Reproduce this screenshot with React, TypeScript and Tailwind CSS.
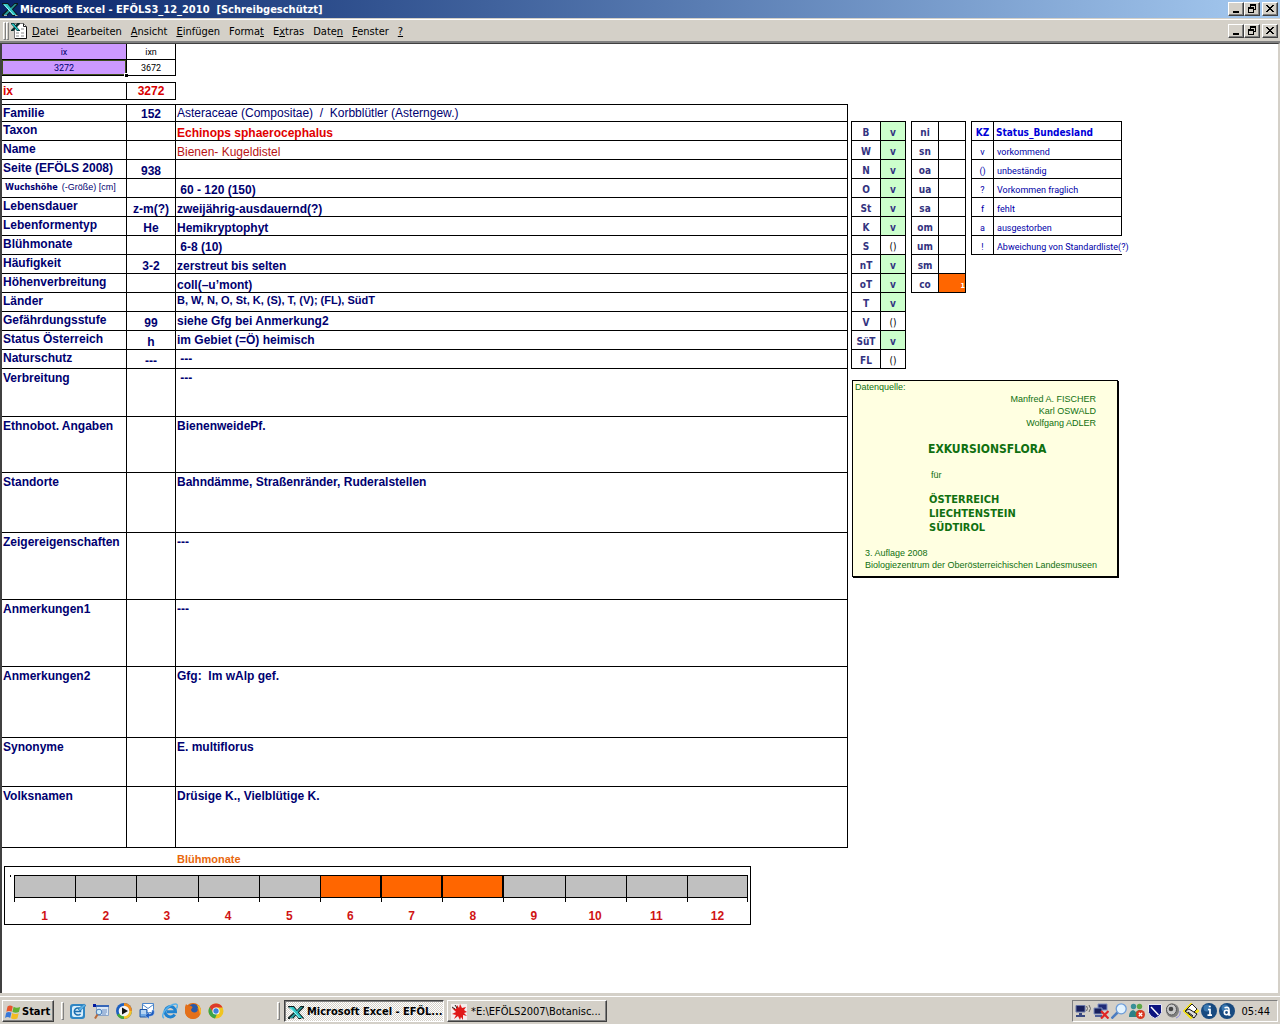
import type { ReactNode } from 'react';
import clsx from 'clsx';

type Align = 'top' | 'middle' | 'bottom';

type FieldRow = {
    label: ReactNode;
    code?: string;
    value?: string;
    height: string;
    align?: Align;
    valueClass?: string;
    tall?: boolean;
};

const fieldRows: FieldRow[] = [
    { label: 'Familie', code: '152', value: 'Asteraceae (Compositae)  /  Korbblütler (Asterngew.)', height: 'h-[17px]', valueClass: 'font-normal', align: 'middle' },
    { label: 'Taxon', value: 'Echinops sphaerocephalus', height: 'h-[19px]', valueClass: 'text-[#e00000]' },
    { label: 'Name', value: 'Bienen- Kugeldistel', height: 'h-[19px]', valueClass: 'font-normal text-[#b81414]' },
    { label: 'Seite (EFÖLS 2008)', code: '938', height: 'h-[19px]' },
    {
        label: (
            <span className="flex items-baseline gap-1 pl-0.5 text-[9px]">
                <span className="font-['DejaVu_Sans_Condensed','DejaVu_Sans',sans-serif]">Wuchshöhe</span>
                <span className="font-normal">(-Größe) [cm]</span>
            </span>
        ),
        value: ' 60 - 120 (150)',
        height: 'h-[19px]',
    },
    { label: 'Lebensdauer', code: 'z-m(?)', value: 'zweijährig-ausdauernd(?)', height: 'h-[19px]' },
    { label: 'Lebenformentyp', code: 'He', value: 'Hemikryptophyt', height: 'h-[19px]' },
    { label: 'Blühmonate', value: ' 6-8 (10)', height: 'h-[19px]' },
    { label: 'Häufigkeit', code: '3-2', value: 'zerstreut bis selten', height: 'h-[19px]' },
    { label: 'Höhenverbreitung', value: 'coll(–u’mont)', height: 'h-[19px]' },
    { label: 'Länder', value: 'B, W, N, O, St, K, (S), T, (V); (FL), SüdT', height: 'h-[19px]', align: 'top', valueClass: 'text-[11px]' },
    { label: 'Gefährdungsstufe', code: '99', value: 'siehe Gfg bei Anmerkung2', height: 'h-[19px]', align: 'middle' },
    { label: 'Status Österreich', code: 'h', value: 'im Gebiet (=Ö) heimisch', height: 'h-[19px]', align: 'middle' },
    { label: 'Naturschutz', code: '---', value: ' ---', height: 'h-[19px]', align: 'middle' },
    { label: 'Verbreitung', value: ' ---', height: 'h-[48px]', align: 'top', tall: true },
    { label: 'Ethnobot. Angaben', value: 'BienenweidePf.', height: 'h-[56px]', align: 'top', tall: true },
    { label: 'Standorte', value: 'Bahndämme, Straßenränder, Ruderalstellen', height: 'h-[60px]', align: 'top', tall: true },
    { label: 'Zeigereigenschaften', value: '---', height: 'h-[67px]', align: 'top', tall: true },
    { label: 'Anmerkungen1', value: '---', height: 'h-[67px]', align: 'top', tall: true },
    { label: 'Anmerkungen2', value: 'Gfg:  Im wAlp gef.', height: 'h-[71px]', align: 'top', tall: true },
    { label: 'Synonyme', value: 'E. multiflorus', height: 'h-[49px]', align: 'top', tall: true },
    { label: 'Volksnamen', value: 'Drüsige K., Vielblütige K.', height: 'h-[61px]', align: 'top', tall: true },
];

const states = [
    ['B', 'v'], ['W', 'v'], ['N', 'v'], ['O', 'v'], ['St', 'v'], ['K', 'v'], ['S', '()'],
    ['nT', 'v'], ['oT', 'v'], ['T', 'v'], ['V', '()'], ['SüT', 'v'], ['FL', '()'],
];

const zones = ['ni', 'sn', 'oa', 'ua', 'sa', 'om', 'um', 'sm', 'co'];

const legend = [
    ['v', 'vorkommend'],
    ['()', 'unbeständig'],
    ['?', 'Vorkommen fraglich'],
    ['f', 'fehlt'],
    ['a', 'ausgestorben'],
    ['!', 'Abweichung von Standardliste(?)'],
];

// [before, accelerator, after]
const menuItems = [
    ['', 'D', 'atei'],
    ['', 'B', 'earbeiten'],
    ['', 'A', 'nsicht'],
    ['', 'E', 'infügen'],
    ['Forma', 't', ''],
    ['E', 'x', 'tras'],
    ['Date', 'n', ''],
    ['', 'F', 'enster'],
    ['', '?', ''],
];

const months = [1, 2, 3, 4, 5, 6, 7, 8, 9, 10, 11, 12];
const flowering = [6, 7, 8];

const raised = 'border border-t-white border-l-white border-r-[#404040] border-b-[#404040] bg-[#d4d0c8] shadow-[inset_-1px_-1px_0_#808080]';

function ExcelIcon() {
    return (
        <svg width="16" height="16" viewBox="0 0 16 16" aria-hidden="true" className="shrink-0">
            <path d="M0 2h6l3 4 3.500-4H16v1.500L11 8.500l5 5.500v1h-5.500L8 11.500 5 15H0v-1.500l6-5.500-6-5z" fill="#0c1c1c" />
            <path d="M12.800 3h2L4.500 14H1.500z" fill="#2a9c9c" />
            <path d="M1 3h4.500l9 11H11z" fill="#30c4c4" />
            <path d="M2 3.500L11.500 14" stroke="#a8ffff" strokeWidth="1" />
            <path d="M13 14.500h2.500M2 14.500h3" stroke="#e8e8e8" strokeWidth=".7" />
        </svg>
    );
}

function SheetIcon() {
    return (
        <svg width="16" height="16" viewBox="0 0 16 16" aria-hidden="true" className="shrink-0">
            <path d="M3.500.500h9l3 3v12h-12z" fill="#fff" stroke="#777" />
            <path d="M12.500.500v3h3" fill="none" stroke="#222" />
            <path d="M15.500 4v11.500H4" fill="none" stroke="#111" />
            <path d="M5 9h3v2H5zM10 5h3v2h-3zM10 9h3v2h-3zM5 12h3v2H5zM10 12h3v2h-3z" fill="#c4c4c4" />
            <path d="M0 0h3l1.500 2L6.500 0H9v1L6 4l3 3.500V8H6L4.300 6 2.500 8H0V7l3-3-3-3z" fill="#0a2a2a" />
            <path d="M.500.800h2L8 7.200H6.200z" fill="#2cc" />
        </svg>
    );
}

function WindowButtons() {
    const base = clsx('flex h-[14px] w-4 items-center justify-center', raised);
    return (
        <div className="flex">
            <button className={base} aria-label="Minimieren">
                <svg width="12" height="10" viewBox="0 0 12 10"><path d="M3 7h6v2H3z" /></svg>
            </button>
            <button className={base} aria-label="Wiederherstellen">
                <svg width="12" height="10" viewBox="0 0 12 10" shapeRendering="crispEdges">
                    <path d="M4 0h6v6H8V5h1V2H5v1H4z" />
                    <path fillRule="evenodd" d="M2 3h6v6H2zM3 5v3h4V5z" />
                </svg>
            </button>
            <button className={clsx(base, 'ml-0.5')} aria-label="Schließen">
                <svg width="12" height="10" viewBox="0 0 12 10" shapeRendering="crispEdges">
                    <path d="M2 1h2v1h1v1h2V2h1V1h2v1H9v1H8v1H7v1h1v1h1v1h1v1H8V7H7V6H5v1H4v1H2V7h1V6h1V5h1V4H4V3H3V2H2z" />
                </svg>
            </button>
        </div>
    );
}

function FieldTable() {
    return (
        <table className="w-full table-fixed border-separate border-spacing-0 border-t border-black text-[12px] leading-[14px] font-bold">
            <colgroup>
                <col className="w-[125px]" />
                <col className="w-[49px]" />
                <col />
            </colgroup>
            <tbody>
                {fieldRows.map((row, i) => (
                    <tr key={i} className={row.height}>
                        <th className={clsx('border-r border-b border-black pl-px text-left align-top whitespace-nowrap', row.tall ? 'pt-0.5' : 'pt-px')}>
                            {row.label}
                        </th>
                        <td className="border-r border-b border-black text-center align-bottom">{row.code}</td>
                        <td
                            className={clsx(
                                'border-r border-b border-black pl-px whitespace-pre',
                                row.align === 'top' && 'align-top',
                                row.align === 'middle' && 'align-middle',
                                !row.align && 'align-bottom',
                                row.tall && 'pt-0.5',
                                row.valueClass,
                            )}
                        >
                            {row.value}
                        </td>
                    </tr>
                ))}
            </tbody>
        </table>
    );
}

function StateTable() {
    return (
        <table className="w-[55px] table-fixed border-separate border-spacing-0 border-t border-l border-black text-center text-[10px] leading-[14px] font-bold text-[#333380]">
            <colgroup>
                <col className="w-[29px]" />
                <col className="w-[25px]" />
            </colgroup>
            <tbody>
                {states.map(([name, status]) => (
                    <tr key={name} className="h-[19px]">
                        <th className="border-r border-b border-black align-bottom">{name}</th>
                        <td className={clsx('border-r border-b border-black align-bottom', status === 'v' ? 'bg-[#ccffcc]' : 'font-normal text-black')}>
                            {status}
                        </td>
                    </tr>
                ))}
            </tbody>
        </table>
    );
}

function ZoneTable() {
    return (
        <table className="w-[55px] table-fixed border-separate border-spacing-0 border-t border-l border-black text-center text-[10px] leading-[14px] font-bold text-[#333380]">
            <tbody>
                {zones.map((zone) => (
                    <tr key={zone} className="h-[19px]">
                        <th className="border-r border-b border-black align-bottom">{zone}</th>
                        <td className={clsx('border-r border-b border-black text-right align-bottom text-[7px] leading-[11px] text-white', zone === 'co' && 'bg-[#ff6600]')}>
                            {zone === 'co' ? '1' : ''}
                        </td>
                    </tr>
                ))}
            </tbody>
        </table>
    );
}

function LegendTable() {
    return (
        <table className="w-[151px] table-fixed border-separate border-spacing-0 border-t border-l border-black text-[9px] leading-[14px] text-[#0000a8]">
            <colgroup>
                <col className="w-[22px]" />
                <col />
            </colgroup>
            <thead>
                <tr className="h-[19px] text-[10px] text-[#0000d8]">
                    <th className="border-r border-b border-black align-bottom">KZ</th>
                    <th className="border-r border-b border-black pl-0.5 text-left align-bottom">Status_Bundesland</th>
                </tr>
            </thead>
            <tbody className="font-['Roboto',sans-serif]">
                {legend.map(([sign, text], i) => (
                    <tr key={sign} className="h-[19px]">
                        <td className="border-r border-b border-black text-center align-bottom">{sign}</td>
                        <td className={clsx('border-b border-black pl-[3px] align-bottom whitespace-nowrap', i < legend.length - 1 && 'border-r')}>
                            {text}
                        </td>
                    </tr>
                ))}
            </tbody>
        </table>
    );
}

function SourceBox() {
    return (
        <div className="mt-[11px] ml-px w-[266px] border border-black bg-[#ffffe1] pt-px pb-[5px] text-[9px] leading-3 text-[#107010] shadow-[1px_1px_0_#000]">
            <p className="pl-0.5 leading-[11px]">Datenquelle:</p>
            <div className="pr-[21px] text-right">
                <p>Manfred A. FISCHER</p>
                <p>Karl OSWALD</p>
                <p>Wolfgang ADLER</p>
            </div>
            <p className="mt-3 pl-[75px] font-['DejaVu_Sans_Condensed','DejaVu_Sans',sans-serif] text-[12px] leading-4 font-bold">EXKURSIONSFLORA</p>
            <p className="mt-3 pl-[78px]">für</p>
            <div className="mt-3 pl-[76px] font-['DejaVu_Sans_Condensed','DejaVu_Sans',sans-serif] text-[11px] leading-[14px] font-bold">
                <p>ÖSTERREICH</p>
                <p>LIECHTENSTEIN</p>
                <p>SÜDTIROL</p>
            </div>
            <div className="mt-3 pl-3">
                <p>3. Auflage 2008</p>
                <p>Biologiezentrum der Oberösterreichischen Landesmuseen</p>
            </div>
        </div>
    );
}

function MonthChart() {
    return (
        <section className="mt-1 pl-0.5">
            <h2 className="pl-[173px] text-[11px] leading-[14px] font-bold text-[#e8670c]">Blühmonate</h2>
            <div className="flex h-[59px] max-w-[747px] border border-black pt-2 pr-0.5 pl-[5px]">
                <div className="mr-[3px] h-0.5 w-px bg-black" />
                <div className="grid flex-1 grid-cols-12">
                    {months.map((month) => {
                        const on = flowering.includes(month);
                        const last = month === months.length;
                        return (
                            <div key={month} className="text-center text-[12px] leading-[14px] font-bold text-[#d01414]">
                                <div
                                    className={clsx(
                                        'h-[23px] border-y border-l border-black',
                                        on ? 'bg-[#ff6600]' : 'bg-[#c0c0c0]',
                                        (on || last) && 'border-r',
                                    )}
                                />
                                <div className={clsx('mb-[7px] h-1 border-l border-black', last && 'border-r')} />
                                {month}
                            </div>
                        );
                    })}
                </div>
            </div>
        </section>
    );
}

const quickIcons: { name: string; art: ReactNode }[] = [
    {
        name: 'Outlook Express',
        art: (
            <>
                <rect x="0" y="1" width="15" height="15" rx="3" fill="#2f86c4" />
                <rect x="2" y="3" width="11" height="11" rx="2" fill="#d8eefc" />
                <path d="M10.500 6a3.600 3.600 0 1 0 0 5M5 8.500h5.500v-2" fill="none" stroke="#1a6db0" strokeWidth="1.500" />
                <path d="M8 6l6-5 2 1.500L10 8z" fill="#5ab0e4" stroke="#1c6cae" strokeWidth=".6" />
            </>
        ),
    },
    {
        name: 'Suche',
        art: (
            <>
                <path d="M3.500 2.500h12v10h-12z" fill="#dce9f7" stroke="#8aa4c8" />
                <path d="M3 2h13v2H3z" fill="#3767b8" />
                <path d="M9 7h5M9 9h5M9 11h4" stroke="#6a8cc0" />
                <circle cx="6" cy="9" r="2.800" fill="#c8e8f8" stroke="#4a7ab8" />
                <path d="M4.500 11.500l-2.500 4" stroke="#b86a3a" strokeWidth="2" />
                <path d="M0 1h3v3H0z" fill="#0018a0" />
            </>
        ),
    },
    {
        name: 'Media Player',
        art: (
            <>
                <circle cx="8" cy="8" r="8" fill="#1d60c0" />
                <path d="M8 0a8 8 0 0 1 8 8H8z" fill="#f08c1c" />
                <path d="M16 8a8 8 0 0 1-8 8V8z" fill="#f4c428" />
                <path d="M8 16a8 8 0 0 1-7-4l7-4z" fill="#48a838" />
                <circle cx="8" cy="8" r="5.300" fill="#f4f4f4" />
                <path d="M6 4.500v7L12 8z" fill="#111" />
            </>
        ),
    },
    {
        name: 'Outlook',
        art: (
            <>
                <path d="M3.500.500h11v9h-11z" fill="#fff" stroke="#4a86cc" />
                <path d="M3.500 1.500l5.500 4 5.500-4" fill="none" stroke="#4a86cc" />
                <path d="M1 6.500h7V14H1z" fill="#6ea8e4" stroke="#2058a8" />
                <path d="M2 8h5M2 10h5" stroke="#fff" />
                <path d="M15 7c1 5-1 6-5 6.500V16l-4-3.500L10 9v2c2 0 3-1 3-4z" fill="#1e5cc0" stroke="#bcd8f4" strokeWidth=".5" />
            </>
        ),
    },
    {
        name: 'Internet Explorer',
        art: (
            <>
                <path d="M12.700 11.500A5.200 5.200 0 1 1 13.500 8.700H5" fill="none" stroke="#1f82d0" strokeWidth="3" />
                <path d="M2 15C-2 13 4 4 11 1.500c4-1.500 5.500.500 3.500 4" fill="none" stroke="#56b0ea" strokeWidth="1.500" />
            </>
        ),
    },
    {
        name: 'Firefox',
        art: (
            <>
                <circle cx="8" cy="8" r="8" fill="#e06a10" />
                <circle cx="8.500" cy="6" r="5" fill="#2a5aa8" />
                <path d="M0 4l1-3 2.500 2.500c2-1 4 0 4 1L6 6.500c0 3 4 4 6 2 1-1 1-3 0-4 3 1 4 4 3 7A8 8 0 0 1 0 9z" fill="#e4701a" />
                <path d="M12 1.500c4 2 5 7 3 10.500-.500-5-1.500-6-3-10.500z" fill="#fbc02a" />
            </>
        ),
    },
    {
        name: 'Chrome',
        art: (
            <>
                <circle cx="8" cy="8" r="7.500" fill="#f0c420" />
                <path d="M1.500 4.200A7.500 7.500 0 0 1 14.600 4.500H8L5 10z" fill="#dc3a2c" />
                <path d="M1.500 4.200L5.500 10l3.500 1-2 4.400A7.500 7.500 0 0 1 1.500 4.200z" fill="#3ca44a" />
                <circle cx="8" cy="8" r="3.600" fill="#fff" />
                <circle cx="8" cy="8" r="2.700" fill="#4080dc" />
            </>
        ),
    },
];

const trayIcons: { name: string; art: ReactNode }[] = [
    {
        name: 'Drahtlosnetzwerk',
        art: (
            <>
                <path d="M1 2.500h9v6.500H1z" fill="#18205c" stroke="#6a78a8" />
                <path d="M4 10h3v2H4zM1 12h9v2H1z" fill="#3a4a80" />
                <path d="M11.500 3q2 2.500 0 5M14 2q3 3.500 0 7" fill="none" stroke="#666" />
            </>
        ),
    },
    {
        name: 'Netzwerk getrennt',
        art: (
            <>
                <path d="M5 1h9v6H5z" fill="#202c78" stroke="#8090c0" />
                <path d="M1 5h8v6H1z" fill="#18205c" stroke="#8090c0" />
                <path d="M2 12h7v2H2z" fill="#50609a" />
                <path d="M8 8l7.500 7.500M15.500 8L8 15.500" stroke="#e02424" strokeWidth="2.200" />
            </>
        ),
    },
    {
        name: 'Lupe',
        art: (
            <>
                <path d="M6.500 9.500l-6 6" stroke="#4c7cc0" strokeWidth="2.500" />
                <circle cx="10.200" cy="5.800" r="5" fill="#e2f3ff" stroke="#6c9cd8" strokeWidth="1.300" />
            </>
        ),
    },
    {
        name: 'Messenger',
        art: (
            <>
                <circle cx="4.500" cy="3.500" r="2.700" fill="#389098" />
                <path d="M0 14c0-9 8-9 8 0z" fill="#2c8088" />
                <circle cx="10.500" cy="3.500" r="2.700" fill="#60a848" />
                <path d="M6 13c0-8 9-8 9 0z" fill="#4c9440" />
                <circle cx="11.500" cy="11.500" r="4.500" fill="#d83820" />
                <path d="M9.800 9.800l3.400 3.400M13.200 9.800l-3.400 3.400" stroke="#fff" strokeWidth="1.300" />
            </>
        ),
    },
    {
        name: 'Virenschutz',
        art: (
            <>
                <path d="M1.500 1.500h13v8q-1.500 4-6.500 6-5-2-6.500-6z" fill="#0c1480" stroke="#e8e8f4" />
                <path d="M4 4l7.500 8" stroke="#fff" strokeWidth="1.500" />
            </>
        ),
    },
    {
        name: 'Lautstärke',
        art: (
            <>
                <ellipse cx="7.500" cy="7.500" rx="6.500" ry="7" fill="#808080" />
                <ellipse cx="6.500" cy="6.500" rx="5" ry="5.500" fill="#c8c8c8" stroke="#555" />
                <circle cx="6" cy="6" r="2.300" fill="#444" />
                <path d="M15 8q1 5-4 7" fill="none" stroke="#8a8ae0" />
            </>
        ),
    },
    {
        name: 'Drucker',
        art: (
            <>
                <path d="M8 0l8 8-8 8-8-8z" fill="#f0e020" stroke="#f0e020" />
                <path d="M3 7l6-6 5 5-6 6z" fill="#fff" stroke="#222" />
                <path d="M2 8l4-2 8 5-3 4z" fill="#ddd" stroke="#111" />
                <path d="M5 9l5 4" stroke="#111" />
            </>
        ),
    },
    {
        name: 'Info',
        art: (
            <>
                <circle cx="8" cy="8" r="8" fill="#174a80" />
                <circle cx="6" cy="5" r="3.500" fill="#3a78b0" />
                <path d="M7 6.500h2V12M6.500 12.200h4.500M7.800 3.500h2" stroke="#fff" strokeWidth="1.700" fill="none" />
            </>
        ),
    },
    {
        name: 'Avast',
        art: (
            <>
                <circle cx="8" cy="8" r="8" fill="#174a80" />
                <circle cx="6" cy="5" r="3.500" fill="#3a78b0" />
                <circle cx="7.500" cy="9.500" r="2.200" fill="none" stroke="#fff" strokeWidth="1.600" />
                <path d="M5.500 4.800q4.500-1.500 4.500 2V12h1.500" stroke="#fff" strokeWidth="1.600" fill="none" />
            </>
        ),
    },
];

function Grip() {
    return <div className="h-[18px] w-[3px] border border-t-white border-r-[#808080] border-b-[#808080] border-l-white" />;
}

function Taskbar() {
    return (
        <footer className="flex h-[31px] items-center border-t-3 border-[#d4d0c8] bg-[#d4d0c8] px-0.5 pt-1 pb-0.5 text-[11px] shadow-[inset_0_1px_0_#fff]">
            <button className={clsx('flex h-[22px] w-[52px] items-center gap-px pt-0.5 pl-0.5 font-bold', raised)}>
                <svg width="16" height="16" viewBox="0 0 16 16" aria-hidden="true" className="shrink-0">
                    <path d="M2.500 2.500q2.500-2 5.300 0l-1.200 5.300q-2.500-1.500-5.200 0z" fill="#e8542c" />
                    <path d="M8.600 2.800q2.800 1.700 6.600.200L13.900 8q-3.200 1.500-6.500 0z" fill="#62b030" />
                    <path d="M1.200 8.800q2.500-1.500 5.200 0l-1.200 5.300q-2.500-2-5.200 0z" fill="#3878d8" />
                    <path d="M7.200 9q3.200 1.700 6.500.200l-1.300 5.300q-3.300 1.500-6.400-.200z" fill="#f4bc24" />
                </svg>
                Start
            </button>
            <div className="ml-[7px]"><Grip /></div>
            <nav className="ml-[6px] flex gap-[7px]">
                {quickIcons.map(({ name, art }) => (
                    <button key={name} aria-label={name}>
                        <svg width="16" height="16" viewBox="0 0 16 16">{art}</svg>
                    </button>
                ))}
            </nav>
            <div className="ml-[53px]"><Grip /></div>
            <button className="ml-1 flex h-[22px] w-[160px] items-center gap-[3px] border border-t-[#404040] border-r-white border-b-white border-l-[#404040] bg-[repeating-conic-gradient(#fff_0_25%,#d4d0c8_0_50%)] bg-size-[2px_2px] pt-0.5 pl-[3px] font-bold whitespace-nowrap shadow-[inset_1px_1px_0_#808080]">
                <ExcelIcon />
                Microsoft Excel - EFÖL...
            </button>
            <button className={clsx('ml-[3px] flex h-[22px] w-[160px] items-center gap-1 pt-0.5 pl-[3px] whitespace-nowrap', raised)}>
                <svg width="16" height="16" viewBox="0 0 16 16" aria-hidden="true" className="shrink-0">
                    <path d="M0 0h16v16H0z" fill="#f4eeee" />
                    <path d="M6 1l2 3 1-4 2 4 4-1-2 3 3 2-3 1 3 3-4-1v5l-2-3-1 3-2-4-4 3 2-4-4-1 4-2-4-4 4 1z" fill="#e01818" />
                    <path d="M1 3l3 2M4 1l2 3" stroke="#222" />
                </svg>
                *E:\EFÖLS2007\Botanisc...
            </button>
            <div className="ml-auto flex h-[22px] items-center gap-0.5 border border-t-[#808080] border-r-white border-b-white border-l-[#808080] pr-[7px] pl-0.5">
                {trayIcons.map(({ name, art }) => (
                    <svg key={name} width="16" height="16" viewBox="0 0 16 16" role="img" aria-label={name}>{art}</svg>
                ))}
                <time className="ml-1 pt-0.5">05:44</time>
            </div>
        </footer>
    );
}

export default function App() {
    return (
        <div className="flex min-h-screen flex-col bg-[#d4d0c8] font-['DejaVu_Sans_Condensed','DejaVu_Sans',sans-serif] text-black">
            <header>
                <div className="flex h-[18px] items-center bg-linear-to-r from-[#0a246a] to-[#a6caf0] pr-0.5 pl-0.5 text-[11px] font-bold whitespace-pre text-white">
                    <ExcelIcon />
                    <h1 className="flex-1 pt-0.5 pl-0.5">Microsoft Excel - EFÖLS3_12_2010  [Schreibgeschützt]</h1>
                    <WindowButtons />
                </div>
                <div className="mt-px flex h-[24px] items-center border-t border-b-2 border-t-white border-b-[#808080] pr-0.5 pl-[3px] text-[11px]">
                    <div className="mr-0.5 flex">
                        <Grip />
                        <Grip />
                    </div>
                    <SheetIcon />
                    <nav className="flex flex-1 gap-[9px] pt-[3px] pl-[5px]">
                        {menuItems.map(([before, key, after]) => (
                            <button key={before + key + after}>
                                {before}
                                <u>{key}</u>
                                {after}
                            </button>
                        ))}
                    </nav>
                    <WindowButtons />
                </div>
            </header>

            <main className="flex-1 border-t border-r-2 border-l-2 border-t-[#404040] border-r-[#d4d0c8] border-l-[#404040] bg-white font-['Liberation_Sans',Arial,sans-serif] text-[#000070]">
                <table className="w-[174px] table-fixed border-separate border-spacing-0 text-center font-['Roboto',sans-serif] text-[9px] leading-[14px]">
                    <colgroup>
                        <col className="w-[125px]" />
                        <col className="w-[49px]" />
                    </colgroup>
                    <tbody>
                        <tr className="h-4">
                            <th className="border-r border-b border-black bg-[#cc99ff] font-normal">ix</th>
                            <th className="border-r border-b border-black font-normal text-black">ixn</th>
                        </tr>
                        <tr className="h-4">
                            <td className="relative border-r border-b border-black bg-[#cc99ff]">
                                3272
                                {/* selection frame and fill handle */}
                                <span className="absolute inset-0 border border-[#405020]" />
                                <span className="absolute -right-0.5 -bottom-0.5 size-1 border-t border-l border-white bg-black" />
                            </td>
                            <td className="border-r border-b border-black text-black">3672</td>
                        </tr>
                    </tbody>
                </table>

                <table className="mt-1.5 w-[174px] table-fixed border-separate border-spacing-0 border-t border-black text-[12px] leading-[14px] font-bold text-[#d80000]">
                    <colgroup>
                        <col className="w-[125px]" />
                        <col className="w-[49px]" />
                    </colgroup>
                    <tbody>
                        <tr className="h-[17px]">
                            <th className="border-r border-b border-black pl-px text-left">ix</th>
                            <td className="border-r border-b border-black text-center">3272</td>
                        </tr>
                    </tbody>
                </table>

                <div className="mt-1 flex">
                    <div className="min-w-0 flex-1">
                        <FieldTable />
                        <MonthChart />
                    </div>
                    <aside className="w-[430px] pt-[17px] pl-[3px]">
                        <div className="flex items-start gap-[5px] font-['DejaVu_Sans_Condensed','DejaVu_Sans',sans-serif]">
                            <StateTable />
                            <ZoneTable />
                            <LegendTable />
                        </div>
                        <SourceBox />
                    </aside>
                </div>
            </main>

            <Taskbar />
        </div>
    );
}
